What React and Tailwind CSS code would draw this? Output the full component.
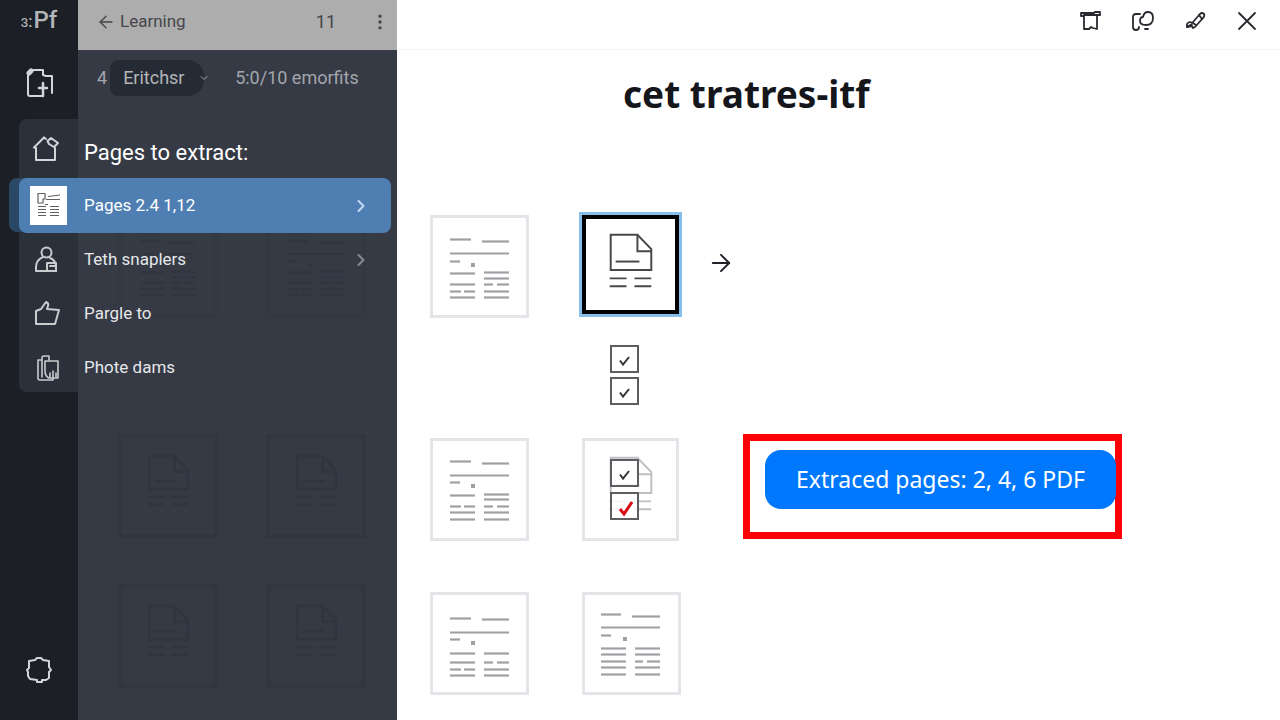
import { ArrowLeft, ArrowRight, ChevronDown, ChevronRight, EllipsisVertical } from "lucide-react";
import { useState } from "react";

// [x1, x2, y] strokes of the page previews
const PREVIEWS = {
  a: [
    [20, 41, 24], [52, 79, 26], [20, 79, 38], [20, 30, 46],
    [20, 45, 58], [54, 79, 57], [54, 79, 63],
    [20, 45, 69], [54, 63, 69], [67, 79, 69],
    [20, 31, 76], [34, 45, 76], [54, 79, 76],
    [20, 45, 82], [54, 79, 82],
  ],
  b: [
    [20, 41, 23], [52, 79, 25], [20, 79, 37], [20, 30, 44],
    [20, 45, 57], [54, 79, 56], [54, 79, 61],
    [20, 31, 68], [34, 45, 68], [54, 63, 68], [67, 79, 68],
    [20, 45, 74], [54, 79, 74],
    [20, 45, 81], [54, 79, 81],
  ],
  c: [
    [20, 41, 26], [52, 79, 27], [20, 79, 40], [20, 30, 47],
    [20, 45, 61], [54, 79, 61],
    [20, 45, 70], [54, 63, 70], [67, 79, 70],
    [20, 31, 77], [34, 45, 77], [54, 79, 77],
    [20, 45, 83], [54, 79, 83],
  ],
  d: [
    [19, 39, 22], [50, 78, 24], [19, 78, 35], [19, 29, 43],
    [19, 44, 56], [53, 78, 56],
    [19, 44, 62], [53, 78, 62],
    [19, 44, 69], [53, 61, 69], [65, 78, 69],
    [19, 44, 75], [53, 78, 75],
    [19, 44, 82], [53, 78, 82],
  ],
};

const DOTS = { a: 50, b: 48, c: 51, d: 47 };

function PageLines({ type }) {
  return (
    <svg viewBox="0 0 99 103" className="w-full h-full" fill="none" stroke="currentColor" strokeWidth="2.2">
      {PREVIEWS[type].map(([x1, x2, y]) => (
        <path key={`${x1}-${y}`} d={`M${x1} ${y}.5H${x2}`} />
      ))}
      <path d={`M41 ${DOTS[type]}h4`} strokeWidth="4" />
    </svg>
  );
}

function DocDrawing({ strokeWidth = 2 }) {
  return (
    <svg viewBox="0 0 98 103" className="w-full h-full" fill="none" stroke="currentColor" strokeWidth={strokeWidth}>
      <path d="M29 19.500H56L70 34V55H29Z" />
      <path d="M56 19.500V36H70" />
      <path d="M34 46.500H58" />
      <path d="M28 63.500H45M53 63.500H70M28 71.500H45M53 71.500H70" />
    </svg>
  );
}

function Thumb({ type }) {
  return (
    <button aria-label="Page" className="w-[99px] h-[103px] shrink-0 border-3 border-[#e4e4e9] bg-white text-[#a0a0a4]">
      <div className="-m-[3px] w-[99px] h-[103px]">
        <PageLines type={type} />
      </div>
    </button>
  );
}

function GhostThumb({ type }) {
  return (
    <div className={`w-[100px] h-[104px] border-4 ${type ? "border-[#333843] text-[#30353f]" : "border-[#313641] text-[#303640]"}`}>
      {type ? <PageLines type={type} /> : <DocDrawing strokeWidth={3} />}
    </div>
  );
}

function Check({ label, red }) {
  const [checked, setChecked] = useState(true);
  return (
    <label className="grid w-[29px] h-7">
      <input
        type="checkbox"
        aria-label={label}
        checked={checked}
        onChange={() => setChecked(!checked)}
        className="col-start-1 row-start-1 appearance-none border-2 border-[#5c5c61] bg-white/85"
      />
      {checked && (
        <svg
          viewBox="0 0 29 28"
          className={`col-start-1 row-start-1 pointer-events-none ${red ? "text-[#d90a14]" : "text-[#333338]"}`}
          fill="none"
          stroke="currentColor"
          strokeWidth={red ? 3 : 2}
        >
          <path d={red ? "M10 17l4 5L22 10" : "M10 15.500l3 4L19 12"} />
        </svg>
      )}
    </label>
  );
}

function Icon({ children, className = "w-7 h-7", size = 28, strokeWidth = 2 }) {
  return (
    <svg
      viewBox={`0 0 ${size} ${size}`}
      className={className}
      fill="none"
      stroke="currentColor"
      strokeWidth={strokeWidth}
      strokeLinejoin="round"
      strokeLinecap="round"
    >
      {children}
    </svg>
  );
}

function Rail() {
  return (
    <aside className="w-[78px] shrink-0 flex flex-col items-center bg-[#1c1f25] text-[#d4d5d8]">
      <div className="h-10 flex items-center gap-px text-[#b4b5b8]">
        <span className="text-base pt-1 font-medium">ɜ:</span>
        <span className="text-2xl font-medium">Pf</span>
      </div>
      <button aria-label="New document" className="mt-7">
        <Icon className="w-8 h-8" size={32}>
          <path d="M5 5V26Q5 28 7 28H20" />
          <path d="M9 2H20V7L23 8H29V25" />
          <path d="M6 5L8 3" strokeWidth="5" />
          <path d="M20 15V28M16 20H24" strokeWidth="2.5" />
        </Icon>
      </button>
      <button aria-label="Settings" className="mt-auto mb-9">
        <Icon>
          <path d="M10 4L12 2H16L18 4L24 5V11L26 14L24 16V22L21 24H17V26H12V24L5 23L3 20V16L2 14L4 12V5Z" />
        </Icon>
      </button>
    </aside>
  );
}

function SidePanel() {
  return (
    <section className="flex-1 flex flex-col bg-[#353a45]">
      <header className="h-[50px] shrink-0 flex items-center pl-[18px] pr-[7px] pb-[6px] bg-[#adadad] text-[#45464a]">
        <button className="flex items-center gap-1 text-[17px]">
          <ArrowLeft className="w-5 h-5" strokeWidth={1.7} />
          Learning
        </button>
        <span className="ml-auto text-lg">11</span>
        <button aria-label="More" className="ml-[34px]">
          <EllipsisVertical className="w-5 h-5" strokeWidth={2} />
        </button>
      </header>
      <div className="h-[56px] shrink-0 flex items-center pl-[19px] text-lg text-[#a3a6ac]">
        <span>4</span>
        <label className="grid items-center ml-[3px]">
          <select
            aria-label="Category"
            className="col-start-1 row-start-1 appearance-none w-[94px] h-9 pl-[13px] rounded-l-lg rounded-r-2xl bg-[#252b35] text-[#b3b5b9]"
          >
            <option>Eritchsr</option>
          </select>
          <ChevronDown className="col-start-1 row-start-1 justify-self-end -mr-[6px] w-3 h-3 pointer-events-none" />
        </label>
        <span className="ml-[31px]">5:0/10 emorfits</span>
      </div>
      <div className="mt-[108px] grid grid-cols-2 w-[248px] ml-10 gap-x-12">
        <GhostThumb type="a" />
        <GhostThumb type="a" />
      </div>
      <div className="mt-[116px] grid grid-cols-2 w-[248px] ml-10 gap-x-12 gap-y-[46px]">
        <GhostThumb />
        <GhostThumb />
        <GhostThumb />
        <GhostThumb />
      </div>
    </section>
  );
}

function MenuRow({ icon, label, arrow }) {
  return (
    <button className="h-[54px] w-full flex items-center pr-5 text-left">
      <span className="w-[65px] pl-[13px] shrink-0 text-[#c9cbcf]">{icon}</span>
      <span className="text-[17px] text-[#e6e7e9]">{label}</span>
      {arrow && <ChevronRight className="ml-auto w-5 h-5 text-[#858a93]" strokeWidth={2.4} />}
    </button>
  );
}

function ExtractMenu() {
  return (
    <nav className="absolute left-[19px] right-[6px] top-[119px] h-[273px]">
      <div className="absolute inset-y-0 left-0 w-[59px] rounded-l-lg bg-[#2b313b]" />
      <div className="absolute -left-[10px] top-[59px] w-8 h-[54px] rounded-l-lg bg-[#2b4766]" />
      <div className="relative">
        <div className="h-[59px] flex items-center">
          <span className="w-[65px] pl-[13px] shrink-0 text-[#d4d5d8]">
            <Icon>
              <path d="M12 2.500L2 12.500L4 13V25H23V13" />
              <path d="M19 3L26 8L22 12L17 9L15.500 6Z" />
              <path d="M12 2.500L14 4" />
            </Icon>
          </span>
          <h2 className="pt-2 text-[22px] text-white">Pages to extract:</h2>
        </div>
        <button className="h-[55px] w-full flex items-center pr-5 rounded-lg bg-[#4f7fb2] text-left">
          <span className="w-[65px] pl-[11px] shrink-0">
            <svg viewBox="0 0 37 39" className="w-[37px] h-[39px] bg-white text-[#5d6065]" fill="none" stroke="currentColor" strokeWidth="1.2">
              <path d="M8 7.500H15V13H13V17H8Z" />
              <path d="M18 10.500L30 9M16 13.500H30M15 18.500H18M8 20.500H16M8 23.500H16M20 20.500H29M20 23.500H29M8 26.500H16M20 26.500H29M8 29.500H16M20 29.500H29" />
            </svg>
          </span>
          <span className="text-[17px] text-white">Pages 2.4 1,12</span>
          <ChevronRight className="ml-auto w-5 h-5 text-[#c3dcf5]" strokeWidth={2.4} />
        </button>
        <MenuRow
          arrow
          label="Teth snaplers"
          icon={
            <Icon>
              <circle cx="14.500" cy="6.500" r="5" />
              <path d="M11 11Q4 14 4 21V25H24V19Q23 14 18 12" />
              <path d="M15 17H24V25H15ZM18 20H24" />
            </Icon>
          }
        />
        <MenuRow
          label="Pargle to"
          icon={
            <Icon>
              <path d="M4 11L9 9L14 2Q17 3 16 6L15 9L27 10L23 24H4Z" />
            </Icon>
          }
        />
        <MenuRow
          label="Phote dams"
          icon={
            <Icon strokeWidth={1.6}>
              <path d="M9 6H6V24Q6 26 8 26H21V24" />
              <path d="M10 23V4Q10 2 12 2H17V6" />
              <path d="M13 7H26V24H17Q13 22 13 17Z" />
              <path d="M18 23V19M21 23V17M24 23V19" />
            </Icon>
          }
        />
      </div>
    </nav>
  );
}

function Toolbar() {
  return (
    <header className="h-[50px] flex items-center justify-end gap-7 pr-[21px] pb-2 border-b border-[#f3f3f6] text-[#292a30]">
      <button aria-label="Crop">
        <Icon className="w-6 h-6" size={24} strokeWidth={1.8}>
          <path d="M2 4H15L16 3H21V6H18V20L14 19L12 18L10 20H5V7H2Z" />
          <path d="M5 6H18" />
        </Icon>
      </button>
      <button aria-label="Share">
        <Icon className="w-6 h-6" size={24} strokeWidth={1.8}>
          <path d="M9 5H5Q2 5 2 8V18Q2 21 5 21Q8 21 8 18" />
          <path d="M12 8Q13 3 17 3Q22 3 22 9Q22 16 15 16Q9 16 9 12Q9 8 12 8Z" />
          <path d="M14 20H17" />
        </Icon>
      </button>
      <button aria-label="Annotate">
        <Icon className="w-6 h-6" size={24} strokeWidth={1.8}>
          <path d="M10 13L17 5Q19 3 21 5Q22 7 20 9L12 18L10 19L9 17L4 18Q3 14 7 13L10 14L13 16" />
          <path d="M4 18L9 15M16 6L19 10" />
        </Icon>
      </button>
      <button aria-label="Close">
        <Icon className="w-6 h-6" size={24} strokeWidth={1.8}>
          <path d="M4 4L20 20M20 4L4 20" />
        </Icon>
      </button>
    </header>
  );
}

export default function App() {
  return (
    <div className="flex min-h-screen bg-white font-['Roboto','Liberation_Sans',sans-serif]">
      <div className="relative w-[397px] shrink-0 flex">
        <Rail />
        <SidePanel />
        <ExtractMenu />
      </div>

      <main className="flex-1 min-w-0">
        <Toolbar />
        <h1 className="h-[88px] flex items-center pl-[226px] text-[37px] font-bold text-[#15161b] font-['Noto_Sans',sans-serif]">
          cet tratres-itf
        </h1>

        <div className="pl-[33px] pt-[77px]">
          <div className="flex items-start">
            <Thumb type="a" />
            <button
              aria-label="Selected page"
              className="ml-[53px] w-[97px] h-[99px] border-4 border-black ring-3 ring-[#86bfec] text-[#48484c]"
            >
              <div className="-m-1 w-[97px] h-[103px]">
                <DocDrawing />
              </div>
            </button>
            <ArrowRight className="ml-7 mt-[34px] w-7 h-7 text-[#222329]" strokeWidth={1.7} />
          </div>

          <div className="w-[29px] ml-[180px] pt-[27px] pb-[33px] flex flex-col gap-1">
            <Check label="Page 2" />
            <Check label="Page 4" />
          </div>

          <div className="flex items-start">
            <Thumb type="b" />
            <div className="relative ml-[53px] w-[97px] h-[103px] shrink-0 border-3 border-[#e4e4e9] text-[#bfbfc4]">
              <div className="-m-[3px] w-[97px] h-[103px]">
                <DocDrawing />
              </div>
              <div className="absolute left-[25px] top-[18px] flex flex-col gap-[5px]">
                <Check label="Page 5" />
                <Check label="Page 6" red />
              </div>
            </div>
            <div className="ml-16 -mt-1 w-[379px] h-[105px] border-[7px] border-[#fb0007] pl-[15px] pt-[9px]">
              <button className="w-[351px] h-[59px] rounded-2xl bg-[#0078fe] text-[23px] text-white whitespace-nowrap font-['Noto_Sans',sans-serif]">
                Extraced pages: 2, 4, 6 PDF
              </button>
            </div>
          </div>

          <div className="mt-[51px] flex">
            <Thumb type="c" />
            <div className="ml-[53px]">
              <Thumb type="d" />
            </div>
          </div>
        </div>
      </main>
    </div>
  );
}
